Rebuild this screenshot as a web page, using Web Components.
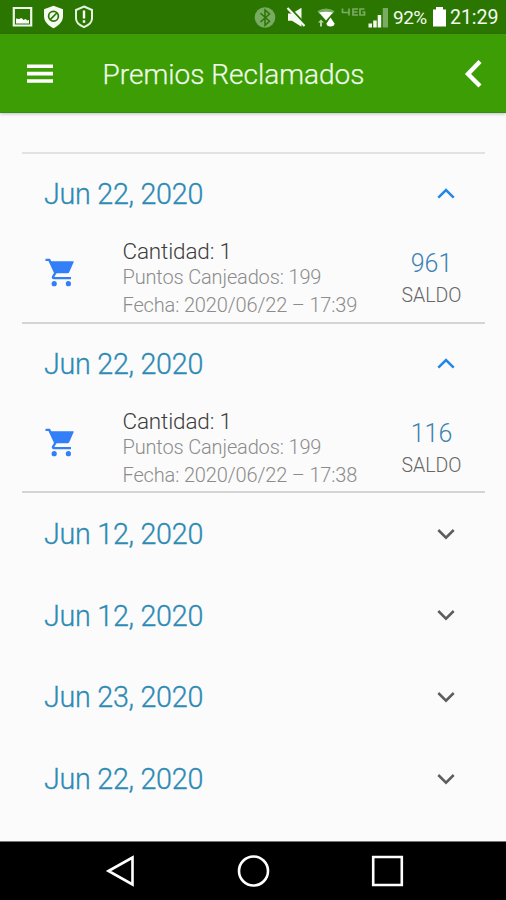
<!DOCTYPE html>
<html lang="es">
<head>
<meta charset="utf-8">
<title>Premios Reclamados</title>
<style>
  html, body { margin: 0; height: 100%; }
  body { font-family: Roboto, "Open Sans", sans-serif; background: #fbfbfb; overflow: hidden; }
</style>
</head>
<body>
<rewards-screen></rewards-screen>
<script>
const define = (name, html, setup) => customElements.define(name, class extends HTMLElement {
  constructor() {
    super();
    this.attachShadow({ mode: 'open' }).innerHTML = html;
  }
  connectedCallback() { if (setup) setup(this, this.shadowRoot); }
});

define('status-bar', `
<style>
  :host { display: flex; height: 34px; box-sizing: border-box; justify-content: space-between; align-items: center; background: #2b7600; color: #f4fbf0; }
  svg { display: block; flex: none; }
  .left, .right { display: flex; align-items: center; }
  .left { margin-left: 12px; gap: 10px; }
  .right { margin-right: 7px; }
  span { line-height: 34px; white-space: nowrap; padding-top: 1px; height: 34px; box-sizing: border-box; }
  .battery { font-size: 19px; width: 36px; letter-spacing: -.5px; }
  .clock { font-size: 19.600px; width: 49px; margin-left: 4px; letter-spacing: -.1px; }
</style>
<div class="left">
  <svg width="21" height="24" viewBox="0 0 21 24"><path d="M1.800 3h17.400v17.500H1.800z" fill="none" stroke="#f0f8ec" stroke-width="2.200"/><path d="M4 18.500v-5l3 .6 2.500-1.200 2 2 2-1 2 1.600 1.500-.5v3.500z" fill="#fff"/></svg>
  <svg width="21" height="24" viewBox="0 0 21 24"><path d="M10.500 .8 20 4.300v6.500c0 6-4.300 10-9.500 12.400C5.300 20.800 1 16.800 1 10.800V4.300z" fill="#f4faf1"/><circle cx="10.500" cy="11.300" r="4.900" fill="none" stroke="#2b7600" stroke-width="1.700"/><path d="m7.200 14.600 6.600-6.600" stroke="#2b7600" stroke-width="1.700"/></svg>
  <svg width="20" height="24" viewBox="0 0 20 24"><path d="M10 1.500 18 5v8.500c0 4-4 7-8 8.700-4-1.700-8-4.700-8-8.700V5z" fill="none" stroke="#e6f3df" stroke-width="2"/><path d="M10 5.500v8M10 15.200v2.500" stroke="#fff" stroke-width="2.400"/></svg>
</div>
<div class="right">
  <svg width="151" height="34" viewBox="241 0 151 34">
    <circle cx="264" cy="17.500" r="10.300" fill="#79ab62"/>
    <path d="m259.500 13.300 9 8-4.500 4V10l4.500 4-9 8" fill="none" stroke="#2b7600" stroke-width="1.500"/>
    <path d="M287 13.500h4l9.500-5.800v19.100l-9.500-6h-4z" fill="#f4faf1"/>
    <path d="M288 7 304.500 24.500" stroke="#2b7600" stroke-width="2"/>
    <path d="M286.500 8 303.500 26" stroke="#f4faf1" stroke-width="2.200"/>
    <path d="M316.500 11q8.500-5 17 0l-1.500 2.500h-14z" fill="#79ab62"/>
    <path d="M318 12.500q7.500-1.500 14 0L325 20.500z" fill="#fff"/>
    <path d="M317 22.500l3-3 3 3h-2v4h-2v-4z" fill="#b5d3a7"/>
    <path d="M329.500 17.500l4 6q0 3-4 3t-4-3z" fill="#fff"/>
    <path d="M341.500 8.500v4h6.500M348 8.500v7M357 9h-5v6h5M352 12h4.500M363.500 9H359v6h4.500v-3h-2" fill="none" stroke="#79ab62" stroke-width="1.700"/>
    <path d="M367.500 23.500h3.500v4h-3.500zm4.700-3h3.500v7h-3.500zm4.500-5.500h3.500v12.500h-3.500z" fill="#f4faf1"/>
    <path d="M381.800 8h5.200v19.500h-5.200z" fill="#79ab62"/>
  </svg>
  <span class="battery">92%</span>
  <svg width="13" height="20" viewBox="0 0 13 20" style="margin-left:4px"><path d="M0 2.500h3V0h7v2.500h3V19.500H0z" fill="#fff"/></svg>
  <span class="clock">21:29</span>
</div>`);

define('app-bar', `
<style>
  :host { display: flex; height: 79px; box-sizing: border-box; align-items: center; background: #3c9e04; color: #effbe9; border-bottom: 1px solid #2e9312; box-shadow: 0 1px 3px rgba(60,30,60,.28); position: relative; }
  svg { display: block; flex: none; }
  .menu { margin: 2px 0 0 26px; }
  .title { flex: 1; margin-left: 48.500px; font-size: 28px; font-weight: 300; line-height: 40px; padding-top: 3px; -webkit-text-stroke: .25px; white-space: nowrap; }
  .back { margin: 1px 23px 0 0; }
</style>
<svg class="menu" width="28" height="22" viewBox="0 0 28 22"><path d="M1 3.200h26M1 10.600h26M1 18h26" stroke="#fff" stroke-width="3.600"/></svg>
<div class="title"><slot></slot></div>
<svg class="back" width="20" height="30" viewBox="0 0 20 30"><path d="M17 2.500 5 15l12 12" fill="none" stroke="#fff" stroke-width="4.400"/></svg>`);

define('reward-group', `
<style>
  :host { display: block; height: 81.600px; box-sizing: border-box; }
  :host([open]) { height: 170px; border-bottom: 2px solid #d4d4d4; }
  :host([open][last]) { height: 169px; margin-bottom: 1px; }
  header { display: flex; height: 81.600px; align-items: center; justify-content: space-between; padding: 0 30px 2px 22px; box-sizing: border-box; }
  .date { font-size: 28.700px; letter-spacing: -.27px; font-weight: 300; line-height: 34px; color: #2c8ab5; -webkit-text-stroke: .3px; white-space: nowrap; padding-top: 1px; }
  svg { display: block; }
</style>
<header><span class="date"></span><svg width="18" height="12" viewBox="0 0 18 12"><path fill="none" stroke-width="2.500"/></svg></header>
<slot></slot>`, (el, root) => {
  const open = el.hasAttribute('open');
  root.querySelector('.date').textContent = el.getAttribute('date');
  const p = root.querySelector('path');
  p.setAttribute('d', open ? 'M1.300 9.700 9 2l7.700 7.700' : 'M1.300 2 9 9.700 16.700 2');
  p.setAttribute('stroke', open ? '#2487e8' : '#5d5d5d');
});

define('reward-detail', `
<style>
  :host { display: grid; grid-template-columns: 100.500px 1fr 107px; height: 86px; font-weight: 300; white-space: nowrap; }
  .icon { padding: 20px 0 0 23px; }
  svg { display: block; }
  .text { padding-top: 2px; color: #8c8c8c; font-size: 20px; letter-spacing: -.15px; }
  .text div { line-height: 26px; }
  .text .qty { color: #3d3d3d; font-size: 22.500px; }
  .text .when { line-height: 30px; }
  .saldo { text-align: center; padding-top: 11px; color: #666; font-size: 19.500px; }
  .saldo b { display: block; font-weight: 300; font-size: 25px; line-height: 34px; color: #3d83b3; }
  .saldo div { line-height: 29px; }
</style>
<div class="icon"><svg width="32" height="32" viewBox="0 0 32 32" fill="#327ff8">
  <path d="M5 5.200H28.300Q29 5.400 28.600 6.300L24.200 16.300Q23.700 17.300 22.500 17.300H10.300z"/>
  <path d="M.5 3.900H4.300L10.300 17 8 20.800Q7.600 22.100 9 22.100H26" fill="none" stroke="#327ff8" stroke-width="2.300"/>
  <circle cx="9.200" cy="27.700" r="2.600"/><circle cx="23.400" cy="27.700" r="2.600"/>
</svg></div>
<div class="text"><div class="qty"><slot name="qty"></slot></div><div><slot name="points"></slot></div><div class="when"><slot name="when"></slot></div></div>
<div class="saldo"><b><slot name="balance"></slot></b><div>SALDO</div></div>`);

define('nav-bar', `
<style>
  :host { display: flex; height: 59px; box-sizing: border-box; background: #000; border-top: 1px solid #777; }
  svg { display: block; }
</style>
<svg width="506" height="58" viewBox="0 842 506 58" fill="none" stroke="#fff" stroke-width="2.600">
  <path d="M108.500 871 132.500 857.500v27z"/><circle cx="253.500" cy="871" r="14.500"/><path d="M373.200 857h28.600v28h-28.600z"/>
</svg>`);

define('rewards-screen', `
<style>
  :host { display: flex; flex-direction: column; height: 900px; width: 506px; background: #fbfbfb; overflow: hidden; }
  main { flex: 1; min-height: 0; padding: 39px 21px 0 22px; }
  .list { border-top: 2px solid #e2e2e2; }
</style>
<status-bar></status-bar>
<app-bar>Premios Reclamados</app-bar>
<main><div class="list">
  <reward-group open date="Jun 22, 2020"><reward-detail><span slot="qty">Cantidad: 1</span><span slot="points">Puntos Canjeados: 199</span><span slot="when">Fecha: 2020/06/22 – 17:39</span><span slot="balance">961</span></reward-detail></reward-group>
  <reward-group open last date="Jun 22, 2020"><reward-detail><span slot="qty">Cantidad: 1</span><span slot="points">Puntos Canjeados: 199</span><span slot="when">Fecha: 2020/06/22 – 17:38</span><span slot="balance">116</span></reward-detail></reward-group>
  <reward-group date="Jun 12, 2020"></reward-group>
  <reward-group date="Jun 12, 2020"></reward-group>
  <reward-group date="Jun 23, 2020"></reward-group>
  <reward-group date="Jun 22, 2020"></reward-group>
</div></main>
<nav-bar></nav-bar>`);
</script>
</body>
</html>
